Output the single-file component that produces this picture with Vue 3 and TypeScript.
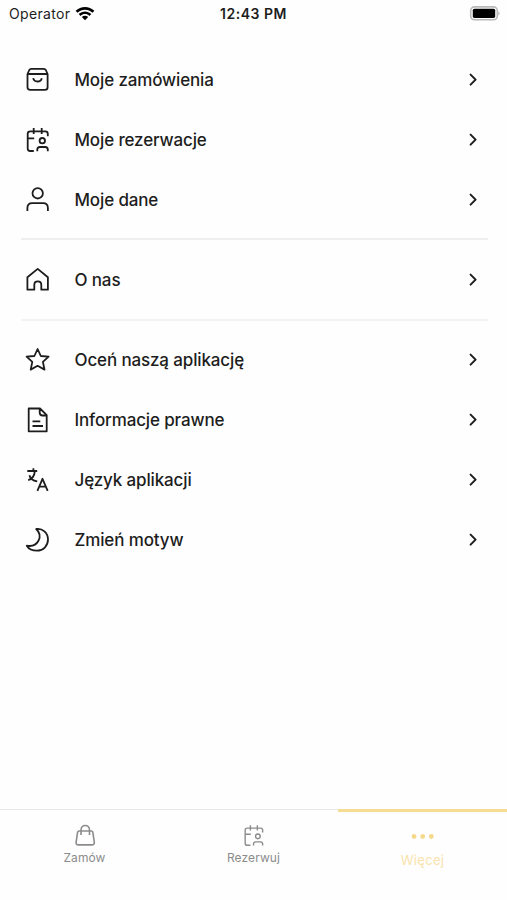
<script setup lang="ts">
interface MenuItem {
  label: string
  paths: string[]
}

const calendarPaths: string[] = [
  'M8.8 24H5.2Q2.7 24 2.7 21.5V6.8Q2.7 4.3 5.2 4.3H20.3Q22.8 4.3 22.8 6.8V9.2M8.7 1V7M16.7 1V7M2.7 11.3H9.2',
  'M14.6 13.7a2.7 2.7 0 1 0 5.4 0a2.7 2.7 0 1 0-5.4 0M12.3 24.3V22.6Q12.3 20 14.9 20H20.2Q22.8 20 22.8 22.6V24.3',
]

const groups: MenuItem[][] = [
  [
    {
      label: 'Moje zamówienia',
      paths: [
        'M2.5 7L4.3 3Q4.9 1.8 6.3 1.8H18.8Q20.2 1.8 20.8 3L22.6 7V20.2Q22.6 22.8 20 22.8H5.1Q2.5 22.8 2.5 20.2ZM2.5 7H22.6M8.2 11.2C9 15.6 15.8 15.6 16.8 11.2',
      ],
    },
    { label: 'Moje rezerwacje', paths: calendarPaths },
    {
      label: 'Moje dane',
      paths: [
        'M7.5 6.3a5.2 5.2 0 1 0 10.4 0a5.2 5.2 0 1 0-10.4 0M2.4 24V21Q2.4 16.2 7.2 16.2H18.1Q22.9 16.2 22.9 21V24',
      ],
    },
  ],
  [
    {
      label: 'O nas',
      paths: ['M2.4 22.7V10.3L12.7 1.9L22.9 10.3V22.7H16.3V17.8Q16.3 14.3 12.8 14.3Q9.3 14.3 9.3 17.8V22.7Z'],
    },
  ],
  [
    {
      label: 'Oceń naszą aplikację',
      paths: ['M12.6 2L15.8 9L23.6 9.7L17.9 14.9L19.5 22.6L12.6 18.8L5.7 22.6L7.3 14.9L1.6 9.7L9.4 9Z'],
    },
    {
      label: 'Informacje prawne',
      paths: ['M3.7 1.5H15L21.7 8.2V24.3H3.7ZM14.7 1.5V5.5Q14.7 8.5 17.7 8.5H21.7M7.5 14.3H15.3M7.5 19H18'],
    },
    {
      label: 'Język aplikacji',
      paths: [
        'M2.3 4H12.2M8.4 1.2V5M9.8 4.4C9.5 8.5 7.2 12 3.2 13.1M4.4 8.2C5.2 11.5 8.2 13.8 12.2 14.4',
        'M12.4 23.8L17.5 11.8L22.7 23.8M14.2 19.7H20.9',
      ],
    },
    {
      label: 'Zmień motyw',
      paths: ['M11.2 2C17.4 1 23 6 23 12.6C23 18.9 18.2 23.7 12 23.7C7.5 23.7 3.7 22 1.8 18.7C12.9 20.8 18.6 9 11.2 2Z'],
    },
  ],
]
</script>

<template>
  <div class="screen">
    <header class="status">
      <div class="carrier">
        <span class="operator">Operator</span>
        <svg class="wifi" width="20" height="15" viewBox="0 0 20 15">
          <path d="M.6 4.8C5.8-.4 14.2-.4 19.4 4.8L17.5 6.8C13.3 2.7 6.7 2.7 2.5 6.8Z" />
          <path d="M3.7 8C7.3 4.6 12.7 4.6 16.3 8L14.4 9.9C11.9 7.5 8.1 7.5 5.6 9.9Z" />
          <path d="M6.8 11.1C8.6 9.4 11.4 9.4 13.2 11.1L10 14.3Z" />
        </svg>
      </div>
      <span class="clock">12:43 PM</span>
      <div class="power">
        <svg width="32" height="15" viewBox="0 0 32 15">
          <rect x="1.7" y=".9" width="26.6" height="12.8" rx="3.8" fill="#fff" stroke="#b9b9b9" stroke-width="1.6" />
          <rect x="3.8" y="2.7" width="22.4" height="9.2" rx="1.6" fill="#000" />
          <path d="M29.4 5.2Q32 7.4 29.4 9.6Z" fill="#b9b9b9" />
        </svg>
      </div>
    </header>

    <main class="menu">
      <section v-for="(group, g) in groups" :key="g" class="group">
        <a v-for="item in group" :key="item.label" class="row">
          <svg class="icon" viewBox="0 -1 25 26">
            <path v-for="p in item.paths" :key="p" :d="p" />
          </svg>
          <span class="label">{{ item.label }}</span>
          <svg class="chevron" width="10" height="16" viewBox="0 0 10 16">
            <path d="M2.6 3.6L7.6 8.6L2.6 13.6" />
          </svg>
        </a>
      </section>
    </main>

    <nav class="tabs">
      <a class="tab">
        <svg class="tab-icon" width="22" height="24" viewBox="0 0 22 24">
          <path d="M5 7H17.4Q18.5 7 18.8 8.1L20.3 18.2Q20.5 20.9 18 20.9H4.4Q1.9 20.9 2.1 18.2L3.6 8.1Q3.9 7 5 7ZM7 11V6C7-.1 15.5-.1 15.5 6V11" />
        </svg>
        <span class="tab-label">Zamów</span>
      </a>
      <a class="tab">
        <svg class="tab-icon" width="22" height="24" viewBox="0.2 -0.5 25.3 27.6">
          <path v-for="p in calendarPaths" :key="p" :d="p" />
        </svg>
        <span class="tab-label">Rezerwuj</span>
      </a>
      <a class="tab active">
        <svg class="dots" width="24" height="6" viewBox="0 0 24 6">
          <circle cx="3" cy="2.5" r="2.4" />
          <circle cx="11.7" cy="2.5" r="2.4" />
          <circle cx="20.3" cy="2.5" r="2.4" />
        </svg>
        <span class="tab-label">Więcej</span>
      </a>
    </nav>
  </div>
</template>

<style>
body {
  background: #fefefe;
}
</style>

<style scoped>
.screen {
  display: flex;
  flex-direction: column;
  height: 900px;
  background: #fefefe;
  color: #1d1d1d;
  font-family: Inter, "Liberation Sans", sans-serif;
}
.status {
  display: grid;
  grid-template-columns: 1fr auto 1fr;
  align-items: center;
  height: 27px;
  padding: 0 6px 0 9px;
}
.carrier {
  display: flex;
  align-items: center;
  gap: 5px;
}
.operator {
  font-size: 14px;
  letter-spacing: 0.35px;
}
.wifi {
  margin-top: -1px;
  fill: #000;
}
.clock {
  margin-left: -3px;
  font-size: 14px;
  font-weight: 600;
  letter-spacing: 0.5px;
}
.power {
  display: flex;
  justify-content: flex-end;
}
.menu {
  flex: 1;
  padding: 22px 19px 0 21px;
}
.group + .group::before {
  content: "";
  display: block;
  height: 2px;
  padding: 0;
  margin: 9px 0;
  background: #efefef;
}
.group:last-child::before {
  margin: 10px 0 8px;
  background: #f3f3f3;
}
.row {
  display: flex;
  align-items: center;
  height: 60px;
  padding: 0 10px 0 4px;
}
.icon {
  width: 25px;
  height: 26px;
  margin-right: 24.5px;
  overflow: visible;
}
.icon path,
.chevron path,
.tab-icon path {
  fill: none;
  stroke: currentColor;
  stroke-width: 1.8;
  stroke-linejoin: round;
}
.label {
  flex: 1;
  padding-top: 2px;
  font-size: 17px;
  font-weight: 500;
  line-height: 24px;
  letter-spacing: -0.14px;
}
.chevron path {
  stroke-width: 2;
  stroke-linecap: round;
}
.tabs {
  display: grid;
  grid-template-columns: repeat(3, 1fr);
  height: 91px;
  box-sizing: border-box;
  border-top: 1px solid #e6e6e6;
}
.tab {
  display: flex;
  flex-direction: column;
  align-items: center;
  padding-top: 14px;
  color: #8c8c8c;
}
.tab-icon path {
  stroke-width: 1.6;
}
.tab-label {
  font-size: 12px;
  line-height: 16px;
  margin-top: 2px;
  letter-spacing: 0.1px;
}
.active {
  margin-top: -1px;
  padding-top: 22px;
  border-top: 3px solid #f5dc93;
  color: #f9e3ab;
}
.dots {
  fill: #f5d98b;
}
.active .tab-label {
  margin-top: 12px;
  font-size: 13px;
  letter-spacing: 0.3px;
}
</style>
